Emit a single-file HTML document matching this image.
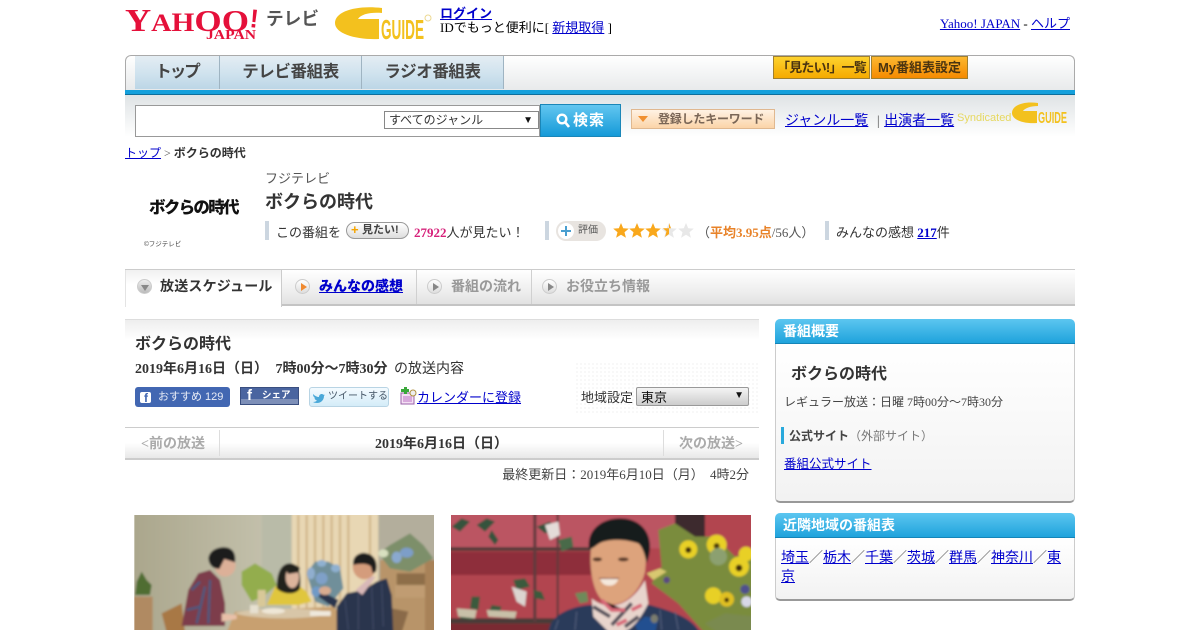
<!DOCTYPE html>
<html lang="ja"><head><meta charset="utf-8"><title>ボクらの時代</title>
<style>
html,body{margin:0;padding:0;background:#fff}
body{width:1200px;height:630px;overflow:hidden;position:relative;font-family:"Liberation Serif","WenQuanYi Zen Hei","Noto Sans CJK JP",serif;font-size:13px;color:#333}
.a{position:absolute;white-space:nowrap}
a{color:#00c;text-decoration:underline}
.g{font-family:"Liberation Sans","Noto Sans CJK JP",sans-serif}
.tab{position:absolute;top:56px;height:33px;background:linear-gradient(#e4edf3,#cfe2ee 55%,#bcd6e6);border-right:1px solid #9fb4c2;text-align:center;font:bold 16.500px/33px "Liberation Sans","Noto Sans CJK JP",sans-serif;color:#444;letter-spacing:-.4px}
.bar{position:absolute;width:4px;height:19px;background:#ccd6e0;top:221px}
.t2{position:absolute;top:270px;height:34px;background:linear-gradient(#fff,#ececec 70%,#e2e2e2);border-right:1px solid #d0d0d0;font:bold 14px/33px "Liberation Sans","Noto Sans CJK JP",sans-serif;color:#999;white-space:nowrap}
.ci{position:absolute;top:9px;width:15px;height:15px;border-radius:50%;background:linear-gradient(#fff,#ddd);border:1px solid #ccc;box-sizing:border-box}
.ci i{position:absolute;left:5px;top:3px;border-left:6px solid #888;border-top:4px solid transparent;border-bottom:4px solid transparent}
.hd{position:absolute;left:775px;width:300px;height:25px;background:linear-gradient(#5cc6f0,#1fa3dc);border-radius:5px 5px 0 0;color:#fff;font:bold 14px/24px "Liberation Sans","Noto Sans CJK JP",sans-serif;text-indent:8px;border-bottom:1px solid #1585b8;box-sizing:border-box}
.bx{position:absolute;left:775px;width:300px;box-sizing:border-box;border:1px solid #ccc;border-top:0;border-bottom:2px solid #999;border-radius:0 0 5px 5px;background:linear-gradient(#fff,#f2f2f2)}
</style></head><body>

<svg class="a" style="left:125px;top:0" width="320" height="50" viewBox="0 0 320 50">
<text x="0" y="31" font-family="Liberation Serif" font-weight="bold" fill="#e5103a" textLength="124" lengthAdjust="spacingAndGlyphs"><tspan font-size="32">Y</tspan><tspan font-size="25">A</tspan><tspan font-size="26">H</tspan><tspan font-size="31">OO</tspan></text>
<text x="0" y="0" transform="translate(124,27) rotate(6)" font-family="Liberation Sans" font-weight="bold" font-size="26" fill="#e5103a">!</text>
<text x="81" y="39" font-family="Liberation Serif" font-weight="bold" font-size="14" fill="#e5103a" textLength="50" lengthAdjust="spacingAndGlyphs">JAPAN</text>
<text x="141" y="25" font-family="Liberation Sans,Noto Sans CJK JP" font-weight="bold" font-size="18" fill="#555" textLength="53" lengthAdjust="spacingAndGlyphs">テレビ</text>
<path d="M257 8C232 5 210 11 210 23C210 34 232 40 254 39V19H233C236 14 246 12 257 13Z" fill="#f3c11e"/>
<text x="256" y="39" font-family="Liberation Sans" font-weight="bold" font-size="28" fill="#f3c11e" textLength="43" lengthAdjust="spacingAndGlyphs">GUIDE</text>
<circle cx="303" cy="18" r="3" fill="none" stroke="#ecd890"/>
</svg>

<div class="a" style="left:440px;top:7px;line-height:14px"><a href="#"><b>ログイン</b></a><br><span style="color:#000">IDでもっと便利に[ <a href="#">新規取得</a> ]</span></div>
<div class="a" style="right:128px;top:16px;color:#000;transform:translate(-2px,-3px)"><a href="#">Yahoo! JAPAN</a> - <a href="#">ヘルプ</a></div>

<div class="a" style="left:125px;top:55px;width:950px;height:35px;box-sizing:border-box;border:1px solid #aaa;border-bottom:0;border-radius:6px 6px 0 0;background:linear-gradient(#fff,#e8eaeb)"></div>
<div class="tab" style="left:135px;width:84px;letter-spacing:-2px">トップ</div>
<div class="tab" style="left:220px;width:141px">テレビ番組表</div>
<div class="tab" style="left:362px;width:141px">ラジオ番組表</div>
<div class="a g" style="left:773px;top:56px;width:97px;height:23px;background:linear-gradient(#fdd22e,#f5aa00);border:1px solid #a08030;box-sizing:border-box;font-size:13px;font-weight:bold;line-height:21px;text-align:center;color:#4a3410;letter-spacing:-.8px">「見たい!」一覧</div>
<div class="a g" style="left:871px;top:56px;width:97px;height:23px;background:linear-gradient(#fcb830,#f58a00);border:1px solid #a08030;box-sizing:border-box;font-size:13px;font-weight:bold;line-height:21px;text-align:center;color:#4a3410">My番組表設定</div>
<div class="a" style="left:125px;top:90px;width:950px;height:5px;background:#14a0dc;border-bottom:1px solid #0d6f9c;box-sizing:border-box"></div>
<div class="a" style="left:125px;top:95px;width:950px;height:42px;background:linear-gradient(#dfe3e5,#fff)"></div>

<div class="a" style="left:135px;top:105px;width:405px;height:32px;background:#fff;border:1px solid #999;box-sizing:border-box"></div>
<div class="a g" style="left:384px;top:111px;width:155px;height:18px;border:1px solid #888;box-sizing:border-box;background:#fff;font-size:12px;line-height:17px;color:#333;padding-left:4px">すべてのジャンル<span style="position:absolute;right:5px;top:0;font-size:10px;color:#111">▼</span></div>
<div class="a g" style="left:540px;top:104px;width:81px;height:33px;box-sizing:border-box;border:1px solid #1a86b8;background:linear-gradient(#62c6f0,#159ad8);color:#fff;font-weight:bold;font-size:15px;line-height:31px;padding-left:15px">
<svg style="position:absolute;left:15px;top:8px" width="14" height="15" viewBox="0 0 14 15"><circle cx="6" cy="6" r="4.300" fill="none" stroke="#fff" stroke-width="2.400"/><path d="M9 9l4 5" stroke="#fff" stroke-width="2.600"/></svg>
<span style="position:absolute;left:32px;letter-spacing:1px">検索</span></div>
<div class="a g" style="left:631px;top:109px;width:144px;height:20px;box-sizing:border-box;border:1px solid #e0b890;background:linear-gradient(#fff2e4,#fbd4a8);font-size:12px;font-weight:bold;line-height:18px;color:#7a6656;padding-left:26px;letter-spacing:-.2px">登録したキーワード<i style="position:absolute;left:6px;top:6px;border-top:6px solid #f09030;border-left:5px solid transparent;border-right:5px solid transparent"></i></div>
<div class="a" style="left:785px;top:110px;font-size:14px;color:#555"><a href="#">ジャンル一覧</a><span style="margin:0 5px"> | </span><a href="#" style="margin-left:-4px">出演者一覧</a></div>
<div class="a g" style="left:957px;top:112px;font-size:11px;color:#e6d860">Syndicated</div>
<svg class="a" style="left:1010px;top:100px" width="60" height="27" viewBox="0 0 60 27"><path d="M28 3C14 1 2 5 2 13C2 20 14 24 27 23V11H13C15 8 21 6 28 6Z" fill="#f3c11e"/><text x="28" y="23" font-family="Liberation Sans" font-weight="bold" font-size="16" fill="#f3c11e" textLength="29" lengthAdjust="spacingAndGlyphs">GUIDE</text></svg>

<div class="a" style="left:125px;top:144px;font-size:12px;color:#555"><a href="#">トップ</a> &gt; <b style="color:#333">ボクらの時代</b></div>

<div class="a g" style="left:149px;top:197px;width:92px;font-weight:900;font-size:16.500px;line-height:22px;color:#111;letter-spacing:-1.700px">ボクらの時代</div>
<div class="a g" style="left:144px;top:238px;font-size:6.500px;color:#444">©フジテレビ</div>
<div class="a" style="left:265px;top:168px;color:#555">フジテレビ</div>
<div class="a g" style="left:265px;top:191px;font-size:18px;font-weight:bold;color:#333;line-height:22px">ボクらの時代</div>

<div class="bar" style="left:265px"></div>
<div class="a" style="left:276px;top:222px">この番組を</div>
<div class="a g" style="left:346px;top:222px;width:63px;height:17px;box-sizing:border-box;border:1px solid #999;border-radius:9px;background:linear-gradient(#fff,#ddd);font-size:11px;font-weight:bold;line-height:14px;color:#444;padding-left:15px"><span style="position:absolute;left:4px;color:#f5a400;font-size:13px">+</span>見たい!</div>
<div class="a" style="left:414px;top:222px;color:#333"><b style="color:#d6217a">27922</b>人が見たい！</div>
<div class="bar" style="left:545px"></div>
<div class="a g" style="left:556px;top:221px;width:50px;height:20px;border-radius:10px;background:#e8e4e0;font-size:10px;line-height:20px;color:#555;text-indent:22px">評価<span style="position:absolute;left:2px;top:2px;width:16px;height:16px;border-radius:50%;background:#fff"></span><span style="position:absolute;left:5px;top:9px;width:10px;height:2px;background:#4a9fd0"></span><span style="position:absolute;left:9px;top:5px;width:2px;height:10px;background:#4a9fd0"></span></div>
<svg class="a" style="left:612px;top:221px" width="84" height="19" viewBox="0 0 84 19">
<defs><path id="s" d="M8 1l2.200 5.200 5.600.4-4.300 3.600 1.400 5.500L8 12.700l-4.900 3 1.400-5.500L.2 6.600l5.600-.4z"/></defs>
<use href="#s" x="1" y="1" fill="#f9a81c"/><use href="#s" x="17" y="1" fill="#f9a81c"/><use href="#s" x="33" y="1" fill="#f9a81c"/><use href="#s" x="49" y="1" fill="#e8e8e8"/><use href="#s" x="66" y="1" fill="#e8e8e8"/>
<path d="M57 2l2 5.200-5 0-3 0 3.500 3.200-1.400 5.500 3.900-2.900z" fill="#f9a81c"/></svg>
<div class="a" style="left:697px;top:222px;color:#555"> （<b style="color:#e8832a">平均3.95点</b>/56人）</div>
<div class="bar" style="left:825px"></div>
<div class="a" style="left:836px;top:222px">みんなの感想 <a href="#"><b>217</b></a>件</div>

<div class="a" style="left:125px;top:269px;width:950px;height:1px;background:#ccc"></div>
<div class="a" style="left:282px;top:304px;width:793px;height:2px;background:#c4c4c4"></div>
<div class="a" style="left:125px;top:270px;width:157px;height:37px;background:linear-gradient(#f0f0f0,#fff 40%);border-left:1px solid #e4e4e4;border-right:1px solid #ccc;box-sizing:border-box;font:bold 14px/33px 'Liberation Sans','Noto Sans CJK JP',sans-serif;color:#333;padding-left:34px;letter-spacing:.2px">放送スケジュール<span class="ci" style="left:11px;top:9px;background:linear-gradient(#eee,#bbb)"></span><i style="position:absolute;left:15px;top:15px;border-top:6px solid #888;border-left:4px solid transparent;border-right:4px solid transparent"></i></div>
<div class="t2" style="left:282px;width:134px"><span class="ci" style="left:13px"><i style="border-left-color:#f08a30"></i></span><a href="#" style="position:absolute;left:37px;color:#00c"><b>みんなの感想</b></a></div>
<div class="t2" style="left:417px;width:114px"><span class="ci" style="left:10px"><i></i></span><span style="position:absolute;left:34px">番組の流れ</span></div>
<div class="t2" style="left:532px;width:543px;border:0"><span class="ci" style="left:10px"><i></i></span><span style="position:absolute;left:34px">お役立ち情報</span></div>

<div class="a" style="left:125px;top:319px;width:634px;height:1px;background:#ddd"></div>
<div class="a" style="left:125px;top:320px;width:634px;height:20px;background:linear-gradient(#eee,#fff)"></div>
<div class="a" style="left:575px;top:362px;width:184px;height:52px;background-image:radial-gradient(#ddd 0.7px,transparent 0.8px);background-size:4px 4px;opacity:.7"></div>
<div class="a g" style="left:135px;top:334px;font-size:16px;font-weight:bold;color:#333;line-height:21px">ボクらの時代</div>
<div class="a" style="left:135px;top:358px;font-size:14px;color:#333"><b>2019年6月16日（日）<span style="margin-left:4px"></span> 7時00分～7時30分</b><span style="margin-left:3px"></span> の放送内容</div>

<div class="a g" style="left:135px;top:387px;width:95px;height:20px;background:#4267b2;border-radius:3px;color:#e8ecf6;font-size:11px;line-height:20px;text-indent:23px">おすすめ 129<span style="position:absolute;left:5px;top:5px;width:11px;height:11px;background:#fff;border-radius:2px"></span><b style="position:absolute;left:9px;top:5px;text-indent:0;color:#4267b2;font-size:12px;line-height:13px">f</b></div>
<div class="a g" style="left:240px;top:387px;width:59px;height:18px;background:linear-gradient(#4a65a0 70%,#7d8fb8 70%);border:1px solid #3a4f80;box-sizing:border-box;color:#fff;font-size:9.500px;font-weight:bold;line-height:16px;text-indent:21px">シェア<b style="position:absolute;left:6px;top:-1px;text-indent:0;font-size:15px;line-height:18px">f</b></div>
<div class="a g" style="left:309px;top:387px;width:80px;height:20px;box-sizing:border-box;border:1px solid #b8d4e4;border-radius:3px;background:linear-gradient(#f4fbff,#d4ecf8);font-size:10px;line-height:18px;color:#456;text-indent:18px">ツイートする<svg style="position:absolute;left:2px;top:4px" width="13" height="11" viewBox="0 0 13 11"><path d="M1 2c2 2 4 3 6 3 0-3 3-4 5-2l1-.5-1 1.500c0 4-3 7-7 7-2 0-3-.5-4-1 2 0 3-.5 4-1.500C3 8 2 6 3 6 1.500 5 1 3.500 1 2z" fill="#4aa8d8"/></svg></div>
<svg class="a" style="left:400px;top:387px" width="17" height="18" viewBox="0 0 17 18"><rect x="1" y="6" width="13" height="11" fill="#f4e0f4" stroke="#9a60a8"/><rect x="3" y="9" width="9" height="6" fill="#d8a8dc"/><circle cx="13" cy="6" r="3" fill="#eee" stroke="#b09040"/><path d="M4 0h3v2h2v3H7v2H4V5H1V2h3z" fill="#3aa83a"/></svg>
<div class="a" style="left:417px;top:387px"><a href="#">カレンダーに登録</a></div>
<div class="a" style="left:581px;top:387px">地域設定</div>
<div class="a g" style="left:636px;top:387px;width:113px;height:19px;box-sizing:border-box;border:1px solid #999;border-radius:2px;background:linear-gradient(#f4f4f4,#ccc);font-size:13px;line-height:19px;color:#111;padding-left:4px">東京<span style="position:absolute;right:4px;top:-2px;font-size:10px">▼</span></div>

<div class="a" style="left:125px;top:427px;width:634px;height:1px;background:#ccc"></div>
<div class="a" style="left:125px;top:428px;width:634px;height:30px;background:linear-gradient(#fff,#fff 50%,#e8e8e8)"></div>
<div class="a" style="left:125px;top:458px;width:634px;height:2px;background:#ccc"></div>
<div class="a" style="left:219px;top:430px;width:1px;height:26px;background:#ddd"></div>
<div class="a" style="left:663px;top:430px;width:1px;height:26px;background:#ddd"></div>
<div class="a" style="left:141px;top:433px;font-size:14px;font-weight:bold;color:#aaa">&lt;前の放送</div>
<div class="a" style="left:220px;top:433px;width:443px;text-align:center;font-size:14px;font-weight:bold;color:#333">2019年6月16日（日）</div>
<div class="a" style="left:679px;top:433px;font-size:14px;font-weight:bold;color:#aaa">次の放送&gt;</div>
<div class="a" style="right:451px;top:464px;color:#444;word-spacing:3px">最終更新日：2019年6月10日（月） 4時2分</div>

<svg class="a" style="left:125px;top:510px" width="320" height="120" viewBox="0 0 960 360">
<defs><filter id="b1" x="-5%" y="-5%" width="110%" height="110%"><feGaussianBlur stdDeviation="3.500"/></filter><clipPath id="c1"><rect x="28" y="15" width="899" height="345"/></clipPath><linearGradient id="w1" x1="0" x2="1"><stop offset="0" stop-color="#aaa68c"/><stop offset="1" stop-color="#c3c0ab"/></linearGradient></defs>
<g clip-path="url(#c1)"><g filter="url(#b1)">
<rect x="20" y="8" width="398" height="360" fill="url(#w1)"/>
<rect x="410" y="8" width="95" height="360" fill="#b9bba8"/>
<rect x="500" y="8" width="262" height="360" fill="#e8d7b4"/>
<path d="M520 15v330M545 15v330M570 15v330M595 15v330M620 15v330M645 15v330M670 15v330M735 15v330" stroke="#d2b88c" stroke-width="7"/>
<rect x="760" y="8" width="175" height="360" fill="#b3ae9c"/>
<rect x="20" y="260" width="63" height="108" fill="#b08a62"/>
<path d="M30 255l5-40 15-30 15 25 15 15-5 30z" fill="#4f6d30"/>
<rect x="765" y="150" width="170" height="218" fill="#b89469"/><rect x="815" y="190" width="90" height="35" fill="#8e6e4a"/><rect x="810" y="225" width="95" height="38" fill="#c09c72"/>
<rect x="900" y="150" width="35" height="218" fill="#a88258"/>
<path d="M760 130l35-25 60-35 40 35 30 40-70 40-60-10z" fill="#7d8f6a"/><ellipse cx="845" cy="128" rx="20" ry="15" fill="#7d9ec8"/><ellipse cx="815" cy="142" rx="15" ry="17" fill="#8aa9cf"/><ellipse cx="775" cy="130" rx="15" ry="12" fill="#d8e0c0"/>
<path d="M110 310l60-30 10 88H125z" fill="#a87845"/><path d="M800 295l50 10-20 63h-30z" fill="#8a6a48"/>
<path d="M350 185l40-25 50 30 15 35-40 35-35 15-30-50z" fill="#93ad4e"/><rect x="398" y="240" width="24" height="50" fill="#d8c898"/>
<path d="M425 285l25-55 30-10 40 5 25 20 15 30-40 10z" fill="#e0c63c"/>
<path d="M455 235c0-50 15-75 40-75 25 0 35 30 30 75-10 20-50 20-70 0z" fill="#23201f"/><ellipse cx="502" cy="202" rx="20" ry="32" fill="#dcb49c"/><path d="M480 175c10-15 35-15 45 0l-5 12-30 5z" fill="#23201f"/>
<path d="M545 190l25-35 40 0 35 20 10 60-45 55-40-15z" fill="#6f8f9a"/><ellipse cx="590" cy="205" rx="18" ry="18" fill="#7fa0c8"/><ellipse cx="575" cy="245" rx="16" ry="16" fill="#6f9ac6"/><ellipse cx="558" cy="190" rx="12" ry="18" fill="#90aecf"/><ellipse cx="632" cy="175" rx="14" ry="12" fill="#8fb0d0"/><ellipse cx="590" cy="160" rx="14" ry="10" fill="#8fb0d0"/>
<path d="M305 368l25-63 300-15 30 78z" fill="#c8a070"/><path d="M330 310c40-18 250-20 290 0-60 20-230 20-290 0z" fill="#d8c6a8"/><ellipse cx="445" cy="303" rx="35" ry="9" fill="#eee6d6"/><rect x="375" y="285" width="25" height="25" fill="#e6e0d0"/><rect x="555" y="303" width="62" height="15" fill="#efe8dc"/>
<path d="M170 348l20-108 30-50 35-10 30 30 15 70v68z" fill="#7d3c4c"/><path d="M200 240l25-25M215 340l25-110M250 340l5-130M185 300l40-10" stroke="#4a5a80" stroke-width="7"/>
<path d="M290 310l45 5v12l-45 8z" fill="#e8c0a8"/>
<ellipse cx="300" cy="165" rx="32" ry="35" fill="#dcb098"/><path d="M250 150c0-30 30-40 52-38 22 2 32 20 28 45l-32-10-15 30c-15 0-33-8-33-37z" fill="#1e1c1e"/>
<path d="M635 290l30-40 50-10 40-25 30-10 15 50 5 113-170 5z" fill="#2a344e"/><path d="M590 245l50 25-10 25-50-35z" fill="#2a344e"/><ellipse cx="600" cy="242" rx="18" ry="13" fill="#d8ac90"/>
<path d="M660 270l10 90M700 250l0 110M740 230l5 130M770 220l5 130" stroke="#4c5670" stroke-width="2"/>
<path d="M692 240l45-40 15 0-40 55z" fill="#d8b8b8"/>
<ellipse cx="718" cy="170" rx="35" ry="38" fill="#d49c7c"/><path d="M685 165c-5-30 25-40 40-35 25 5 35 30 28 55l-10 5-5-20c-10-10-30-10-53-5z" fill="#1d1a1c"/>
</g></g></svg>

<svg class="a" style="left:445px;top:510px" width="320" height="120" viewBox="0 0 960 360">
<defs><filter id="b2" x="-5%" y="-5%" width="110%" height="110%"><feGaussianBlur stdDeviation="3.500"/></filter><clipPath id="c2"><rect x="18" y="15" width="900" height="345"/></clipPath></defs>
<g clip-path="url(#c2)"><g filter="url(#b2)">
<rect x="8" y="5" width="920" height="365" fill="#b24450"/>
<rect x="8" y="5" width="690" height="110" fill="#bb5462"/>
<rect x="8" y="125" width="450" height="70" fill="#8e2f3a"/>
<rect x="8" y="112" width="450" height="10" fill="#4a3a38"/><rect x="8" y="325" width="330" height="16" fill="#4a3a38"/><rect x="8" y="341" width="330" height="29" fill="#7a2a32"/>
<rect x="265" y="5" width="9" height="330" fill="#5e3a3c"/><rect x="335" y="5" width="6" height="330" fill="#5e3a3c"/>
<rect x="690" y="5" width="90" height="85" fill="#3e2c2e"/>
<path d="M20 50l30-25 25 10-30 30zM95 45l30-20 25 10-30 30zM140 60l20 30-10 15-20-25zM275 50l40-15 15 25-30 10z" fill="#36533c"/><path d="M300 45l40-10 5 40-30 15z" fill="#e4dcd8"/><path d="M340 90l40-10 5 30-35 15z" fill="#4a6a48"/>
<path d="M205 210l35-5 15 25-40 10zM265 240l25 5 10 25-30-5zM80 260l25 0-5 40-25-5zM140 285l30 5-10 25-30-5zM50 305l40 5-10 20-35-5z" fill="#3a5a3e"/><path d="M200 230l45 15-5 45-25-15z" fill="#dcd4d0"/><path d="M35 295l60 5-5 25-50-5zM125 300l90 5-5 20-80-5z" fill="#c8c0a8"/><path d="M390 250l35-5 5 30-25 5z" fill="#6e8a5a"/>
<path d="M640 60l50-20 60 40 60 0 60 60 60-20v220l-70 30H780l-80-90-80-60 30-50z" fill="#7a8c3c"/>
<circle cx="730" cy="118" r="27" fill="#e8d028"/><circle cx="730" cy="120" r="9" fill="#3c2a10"/><circle cx="815" cy="104" r="30" fill="#e8d028"/><circle cx="815" cy="108" r="9" fill="#4c3a10"/><circle cx="882" cy="170" r="30" fill="#e8d028"/><circle cx="882" cy="174" r="10" fill="#3c2a10"/><circle cx="903" cy="132" r="22" fill="#e8d028"/><circle cx="805" cy="257" r="25" fill="#e8d028"/><circle cx="845" cy="268" r="22" fill="#e0c020"/><circle cx="845" cy="270" r="7" fill="#3c2a10"/><circle cx="900" cy="238" r="14" fill="#50508c"/><circle cx="905" cy="275" r="16" fill="#d8d8e8"/><circle cx="820" cy="140" r="26" fill="#8ca070"/><circle cx="665" cy="210" r="10" fill="#5a4a80"/><path d="M605 190l40-15 20 10-40 25z" fill="#d8c870"/><path d="M780 340l60-30 88 10v50H820z" fill="#7a8a50"/>
<path d="M310 370c0-50 60-80 125-85h180c70 20 130 40 150 85z" fill="#2a3a5a"/><path d="M330 360l10-30M390 360l5-55M650 360l-5-60M700 360l-10-55" stroke="#55627e" stroke-width="3"/><path d="M570 345l30-25 40 5-10 45h-50z" fill="#245090"/>
<ellipse cx="628" cy="326" rx="11" ry="13" fill="#7a7c6e"/>
<path d="M440 100c-10 60 0 160 45 180 45 15 100-30 115-95l5-60-25-40-100-10z" fill="#dda37c"/>
<path d="M440 265c40 35 110 35 160-55l10 70c-30 60-60 90-95 90h-20l-50-50z" fill="#e8d4cc"/><path d="M445 290l50 30M500 345l60-65M540 350l40-30" stroke="#55505a" stroke-width="11"/><path d="M470 270l30 30 40 0M515 345l30-15M560 300l30-15" stroke="#d86878" stroke-width="11"/>
<path d="M432 115C425 60 470 25 525 25s90 35 90 85c0 20-5 35-10 50-5-25-12-50-25-60-30-10-70-15-105-5-20 5-30 25-43 20z" fill="#191a1f"/>
<path d="M465 207c20-5 40-5 55 0-5 15-15 20-28 20-15 0-22-8-27-20z" fill="#f5e8dc"/><path d="M462 205h60" stroke="#7a3a2c" stroke-width="3"/><ellipse cx="457" cy="148" rx="14" ry="6" fill="#5a3a2a"/><ellipse cx="535" cy="148" rx="16" ry="6" fill="#5a3a2a"/>
</g></g></svg>

<div class="hd" style="top:319px">番組概要</div>
<div class="bx" style="top:344px;height:159px"></div>
<div class="a g" style="left:791px;top:364px;font-size:16px;font-weight:bold;line-height:21px;color:#333">ボクらの時代</div>
<div class="a" style="left:784px;top:393px;font-size:12px;color:#444">レギュラー放送：日曜 7時00分～7時30分</div>
<div class="a" style="left:781px;top:427px;width:3px;height:17px;background:#29a9dc"></div>
<div class="a" style="left:789px;top:427px;font-size:12px;color:#777"><b style="color:#444">公式サイト</b>（外部サイト）</div>
<div class="a" style="left:784px;top:453px;font-size:12.500px"><a href="#">番組公式サイト</a></div>
<div class="hd" style="top:513px">近隣地域の番組表</div>
<div class="bx" style="top:538px;height:63px"></div>
<div class="a" style="left:781px;top:549px;width:285px;white-space:normal;font-size:14px;line-height:19px;color:#555"><a href="#">埼玉</a>／<a href="#">栃木</a>／<a href="#">千葉</a>／<a href="#">茨城</a>／<a href="#">群馬</a>／<a href="#">神奈川</a>／<a href="#">東京</a></div>
</body></html>
